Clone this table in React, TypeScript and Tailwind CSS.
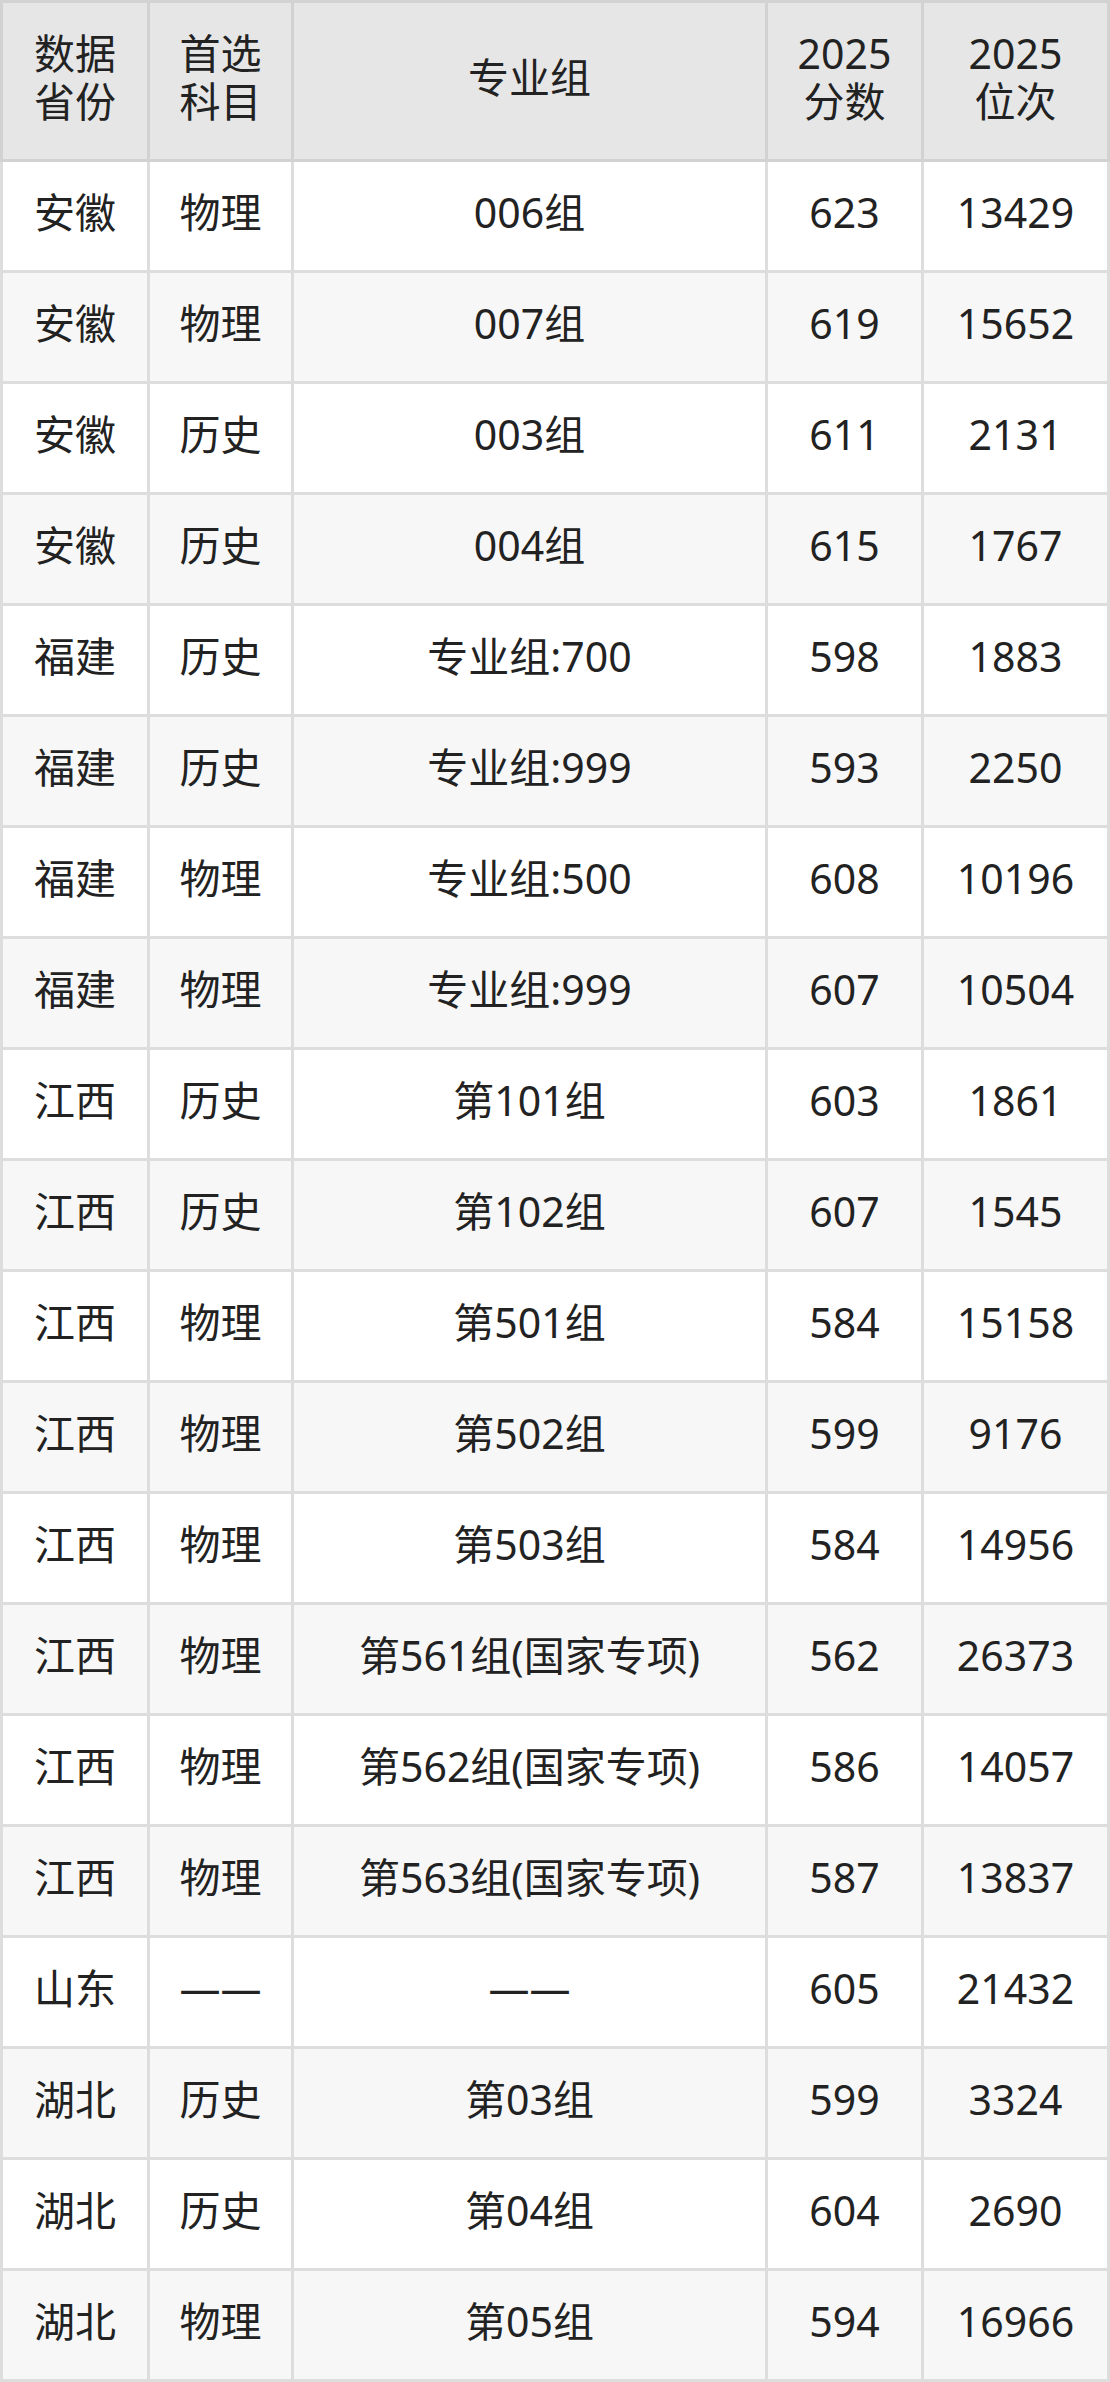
import React from "react";

type Row = [string, string, string, string, string];

const rows: Row[] = [
  ["安徽", "物理", "006组", "623", "13429"],
  ["安徽", "物理", "007组", "619", "15652"],
  ["安徽", "历史", "003组", "611", "2131"],
  ["安徽", "历史", "004组", "615", "1767"],
  ["福建", "历史", "专业组:700", "598", "1883"],
  ["福建", "历史", "专业组:999", "593", "2250"],
  ["福建", "物理", "专业组:500", "608", "10196"],
  ["福建", "物理", "专业组:999", "607", "10504"],
  ["江西", "历史", "第101组", "603", "1861"],
  ["江西", "历史", "第102组", "607", "1545"],
  ["江西", "物理", "第501组", "584", "15158"],
  ["江西", "物理", "第502组", "599", "9176"],
  ["江西", "物理", "第503组", "584", "14956"],
  ["江西", "物理", "第561组(国家专项)", "562", "26373"],
  ["江西", "物理", "第562组(国家专项)", "586", "14057"],
  ["江西", "物理", "第563组(国家专项)", "587", "13837"],
  ["山东", "——", "——", "605", "21432"],
  ["湖北", "历史", "第03组", "599", "3324"],
  ["湖北", "历史", "第04组", "604", "2690"],
  ["湖北", "物理", "第05组", "594", "16966"],
];

const cols = "grid grid-cols-[144px_141px_471px_153px_183px] gap-[3px]";
const head = "h-[156px] pb-[8px] bg-[#e6e6e6] flex items-center justify-center text-center";

export default function App() {
  return (
    <div
      className="w-[1110px] bg-white text-[#222] text-[41px] leading-[48px]"
      style={{ fontFamily: '"Noto Sans", "Noto Sans CJK SC", sans-serif' }}
    >
      {/* header */}
      <div className={`${cols} bg-[#d2d2d2] p-[3px]`}>
        <div className={head}>
          数据<br />省份
        </div>
        <div className={head}>
          首选<br />科目
        </div>
        <div className={head}>专业组</div>
        <div className={head}>
          2025<br />分数
        </div>
        <div className={head}>
          2025<br />位次
        </div>
      </div>

      {/* body */}
      <div className={`${cols} bg-[#dddddd] px-[3px] pb-[3px]`}>
        {rows.map((row, i) =>
          row.map((cell, j) => (
            <div
              key={`${i}-${j}`}
              className={`h-[108px] pb-[8px] flex items-center justify-center text-center whitespace-nowrap ${
                i % 2 === 0 ? "bg-white" : "bg-[#f7f7f7]"
              }`}
            >
              {cell}
            </div>
          ))
        )}
      </div>
    </div>
  );
}
